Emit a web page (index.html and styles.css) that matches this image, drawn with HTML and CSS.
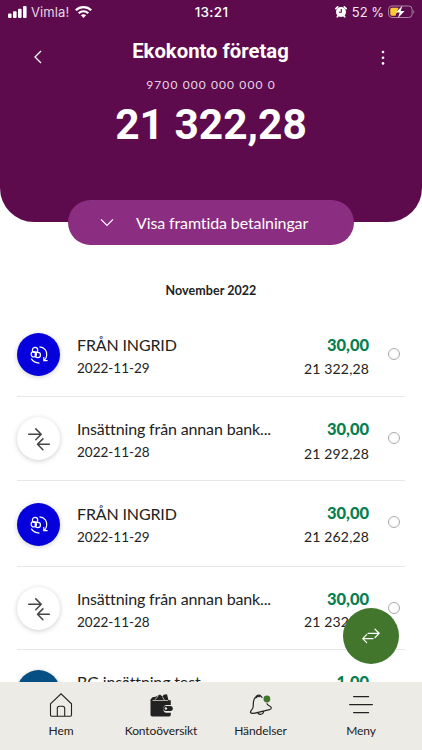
FILE: index.html
```html
<!DOCTYPE html>
<html lang="sv">
<head>
<meta charset="utf-8">
<meta name="viewport" content="width=device-width, initial-scale=1">
<title>Ekokonto företag</title>
<link rel="stylesheet" href="styles.css">
</head>
<body>
<svg width="0" height="0" class="defs">
  <symbol id="recurring" viewBox="0 0 24 24">
    <g fill="none" stroke="currentColor" stroke-width="1.3">
      <circle cx="7.700" cy="6.500" r="2.900"/><circle cx="6.300" cy="11.300" r="2.900"/><circle cx="10.700" cy="12" r="2.900"/>
      <path d="M12.500 3.200c5.500.4 8.500 4.300 7.900 9-.2 2.200-1 4-2.400 5.500M17.200 14.200v4h4.200M3.500 16c1.800 3 5 4.700 9 4.800"/>
    </g>
  </symbol>
  <symbol id="transfer" viewBox="0 0 24 24">
    <g fill="none" stroke="currentColor" stroke-width="1.500" stroke-linecap="round" stroke-linejoin="round">
      <path d="M1.700 7.300h12M8.800 1.900l5.400 5.400-5.400 5.400M22.300 17.300H10.500M15.900 11.900l-5.400 5.400 5.400 5.400"/>
    </g>
  </symbol>
</svg>
<div class="app">
  <header class="header">
    <div class="status">
      <div class="status-left">
        <svg width="19" height="12" viewBox="0 0 19 12" fill="#fff"><rect x="0" y="7.500" width="3.600" height="4.500" rx="1"/><rect x="5" y="5.300" width="3.600" height="6.700" rx="1"/><rect x="10" y="2.700" width="3.600" height="9.300" rx="1"/><rect x="15" y="0" width="3.600" height="12" rx="1"/></svg>
        <span class="carrier">Vimla!</span>
        <svg width="17" height="12" viewBox="0 0 17 12" fill="none" stroke="#fff" stroke-width="2.200"><path d="M.8 4.300c4.300-4.200 11.100-4.200 15.400 0M3.700 7.200c2.700-2.600 6.900-2.600 9.600 0"/><path d="M5.900 9.200c1.500-1.300 3.700-1.300 5.200 0L8.500 12z" fill="#fff" stroke="none"/></svg>
      </div>
      <div class="time">13:21</div>
      <div class="status-right">
        <svg width="12" height="12" viewBox="0 0 12 12"><path d="M.9 2.700 2.700.9M9.300.9l1.800 1.800M2.300 10.800l1-1.200M9.700 10.800l-1-1.200" stroke="#fff" stroke-width="1.700" stroke-linecap="round"/><circle cx="6" cy="6" r="5" fill="#fff"/><path d="M6.300 3v3.300H3.900" fill="none" stroke="#5d0b4d" stroke-width="1.100"/></svg>
        <span class="percent">52 %</span>
        <svg width="27" height="14" viewBox="0 0 27 14"><rect x=".6" y="1" width="23.500" height="11.500" rx="3.300" fill="none" stroke="#a884a0"/><path d="M4 2.700h6.500l-3 8.100H4a1.700 1.700 0 0 1-1.700-1.700V4.400A1.700 1.700 0 0 1 4 2.700z" fill="#fecb2e"/><path d="M25.300 5v3.800c1.300-.7 1.300-3.100 0-3.800z" fill="#a884a0"/><path d="M14.500.6 7.800 7.400h3.900l-1.900 5.800 6.800-7.300h-4z" fill="#fff"/></svg>
      </div>
    </div>
    <div class="title-row">
      <svg class="back" width="10" height="14" viewBox="0 0 10 14" fill="none" stroke="#fff" stroke-width="1.300"><path d="M8 1 2 7l6 6"/></svg>
      <h1>Ekokonto företag</h1>
      <svg class="more" width="4" height="16" viewBox="0 0 4 16" fill="#fff"><circle cx="2" cy="2" r="1.300"/><circle cx="2" cy="7.700" r="1.300"/><circle cx="2" cy="13.400" r="1.300"/></svg>
    </div>
    <div class="account">9700 000 000 000 0</div>
    <div class="balance">21 322,28</div>
  </header>
  <button class="upcoming">
    <svg width="14" height="9" viewBox="0 0 14 9" fill="none" stroke="#fff" stroke-width="1.200"><path d="m1 1.300 6 6 6-6"/></svg>
    <span>Visa framtida betalningar</span>
  </button>
  <h2>November 2022</h2>
  <main class="list">
    <div class="row">
      <div class="avatar blue"><svg width="22" height="22"><use href="#recurring"/></svg></div>
      <div class="info"><div class="name upper">FRÅN INGRID</div><div class="date">2022-11-29</div></div>
      <div class="sums"><div class="amount">30,00</div><div class="after">21 322,28</div></div>
      <i class="radio"></i>
    </div>
    <div class="row second">
      <div class="avatar white"><svg width="24" height="24"><use href="#transfer"/></svg></div>
      <div class="info"><div class="name">Insättning från annan bank...</div><div class="date">2022-11-28</div></div>
      <div class="sums"><div class="amount">30,00</div><div class="after">21 292,28</div></div>
      <i class="radio"></i>
    </div>
    <div class="row third">
      <div class="avatar blue"><svg width="22" height="22"><use href="#recurring"/></svg></div>
      <div class="info"><div class="name upper">FRÅN INGRID</div><div class="date">2022-11-29</div></div>
      <div class="sums"><div class="amount">30,00</div><div class="after">21 262,28</div></div>
      <i class="radio"></i>
    </div>
    <div class="row fourth">
      <div class="avatar white"><svg width="24" height="24"><use href="#transfer"/></svg></div>
      <div class="info"><div class="name">Insättning från annan bank...</div><div class="date">2022-11-28</div></div>
      <div class="sums"><div class="amount">30,00</div><div class="after">21 232,28</div></div>
      <i class="radio"></i>
    </div>
    <div class="row fifth">
      <div class="avatar teal"></div>
      <div class="info"><div class="name">BG insättning test</div></div>
      <div class="sums"><div class="amount">1,00</div></div>
    </div>
  </main>
  <button class="fab" aria-label="Överföring">
    <svg width="20" height="18" viewBox="0 0 20 18" fill="none" stroke="#fff" stroke-width="1.200" stroke-linecap="round" stroke-linejoin="round"><path d="M7 6.300h11.200M14 2.200l4.200 4.100-4.200 4.200M12 11.600H1.800M5.700 7.600l-4 4 4 4.100"/></svg>
  </button>
  <nav class="nav">
    <a class="tab"><svg width="26" height="26" viewBox="0 0 26 26" fill="none" stroke="#222" stroke-width="1.100"><path d="M2.500 11.800 13 1.800l10.500 10V23a1.200 1.200 0 0 1-1.200 1.200H3.700A1.200 1.200 0 0 1 2.500 23zM9.300 24v-7.500a2.200 2.200 0 0 1 2.200-2.200h3a2.200 2.200 0 0 1 2.200 2.200V24"/></svg><span>Hem</span></a>
    <a class="tab"><svg width="26" height="26" viewBox="0 0 26 26"><path d="M2.500 7.500 4.500 5.300l3.200-.5L12 2.500l2.700 2.300.8-2 3.500-.6 1.500 6h2.300v4.800h-4.500a4 4 0 0 0 0 7.800h4.500v2a1.700 1.700 0 0 1-1.700 1.700H4.200a1.700 1.700 0 0 1-1.700-1.700z" fill="#222"/><path d="M4.500 8.500h15.500M7 7.800l3.200-4M14.500 5l2 3.200" fill="none" stroke="#ecebe6" stroke-width=".7"/><rect x="15.200" y="14" width="9.600" height="5" rx="2.500" fill="#222"/><circle cx="17.900" cy="16.500" r="1.200" fill="#ecebe6"/></svg><span>Kontoöversikt</span></a>
    <a class="tab"><svg width="26" height="26" viewBox="0 0 26 26" fill="none" stroke="#222" stroke-width="1.200" stroke-linecap="round" stroke-linejoin="round"><path d="M7.700 5.300C4.500 7.500 5.700 12 5 15.500c-.4 2.200-3 3.600-2.500 5 .4 1.200 2.700.9 4.500.7l14.500-3.600c2.300-.8 2.300-2.500.4-3.400-1.600-.7-2.300-1.300-2.900-2.500M7.700 5.300c.2-2 3.600-3 5-1.300l1.300 1.400M8.500 5.600c.3-1.300 1.700-1.700 3-.9M10.200 21.500c1.500 1.600 5 1 5.400-1.600"/><circle cx="18.900" cy="7" r="3.400" fill="#41762c" stroke="none"/></svg><span>Händelser</span></a>
    <a class="tab"><svg width="26" height="26" viewBox="0 0 26 26" fill="none" stroke="#222" stroke-width="1.200" stroke-linecap="round"><path d="M5.600 4.600h15M1.600 12.600h22.800M5.600 20.600h15"/></svg><span>Meny</span></a>
  </nav>
</div>
</body>
</html>
```
FILE: styles.css
```css
* { box-sizing: border-box; }
body { margin: 0; background: #fff; font-family: Lato, sans-serif; font-variant-ligatures: none; color: #222; }
svg { display: block; flex: none; }
.defs { position: absolute; }
button { border: 0; padding: 0; font: inherit; color: #fff; }
.app { width: 422px; height: 750px; overflow: hidden; position: relative; }
.header { height: 222px; background: #5d0b4d; border-radius: 0 0 34px 34px; color: #fff; }
.status { display: grid; grid-template-columns: 1fr auto 1fr; height: 24px; padding: 0 7px 0 8px; align-items: center; font-family: Inter, sans-serif; font-size: 13px; line-height: 24px; }
.status-left, .status-right { display: flex; align-items: center; }
.status-left { gap: 4px; }
.carrier { width: 39px; margin-right: 1px; letter-spacing: .1px; color: #e5d6e1; }
.time { font-weight: 500; font-size: 13.5px; letter-spacing: .3px; }
.status-right { justify-content: flex-end; }
.percent { margin: 0 4px 0 5px; letter-spacing: 0; color: #f1e7ef; }
.title-row { display: flex; align-items: center; justify-content: space-between; height: 30px; margin-top: 12px; padding: 0 37px 0 33px; }
.back { margin-top: 11px; }
.more { margin-top: 13px; }
h1 { margin: 0 0 0 -3px; font: 700 20.300px/30px Roboto, sans-serif; }
.account { margin-top: 9px; text-align: center; font-size: 12px; line-height: 20px; letter-spacing: 1.100px; color: #e8d5e4; }
.balance { margin-top: 5px; text-align: center; font: 700 42.500px/50px Roboto, sans-serif; }
.upcoming { display: flex; align-items: center; position: relative; width: 286px; height: 45px; margin: -22px 0 0 68px; padding-left: 32px; gap: 22px; border-radius: 23px; background: #8b2d80; font-size: 16px; letter-spacing: -.12px; }
h2 { margin: 36px 0 0; text-align: center; font-size: 12.500px; line-height: 20px; font-weight: 700; letter-spacing: .05px; }
.list { margin: 11px 17px 0; }
.row { display: flex; height: 85px; padding-top: 21px; border-bottom: 1px solid #e7e7e7; }
.second { height: 84px; padding-top: 20px; }
.third { height: 86px; padding-top: 22px; }
.fourth { height: 83px; padding-top: 20px; }
.fifth { padding-top: 20px; }
.avatar { width: 43px; height: 43px; border-radius: 50%; display: flex; align-items: center; justify-content: center; flex: none; box-shadow: 0 1px 5px rgba(0,0,0,.2); }
.blue { background: #0500dc; color: #fff; }
.white { background: #fff; color: #444; }
.teal { background: #064f85; }
.info { margin-left: 17px; width: 200px; white-space: nowrap; }
.name { font-size: 16px; line-height: 23px; letter-spacing: -.14px; }
.date { font-size: 13.500px; line-height: 24px; }
.third .info { margin-top: -1px; }
.sums { width: 92px; padding-top: 1px; text-align: right; }
.amount { font-size: 16.500px; line-height: 23px; font-weight: 900; letter-spacing: -.05px; color: #087f50; }
.after { font-size: 14px; line-height: 24px; letter-spacing: .15px; }
.second .after { line-height: 26px; }
.radio { width: 12px; height: 12px; margin: 15px 0 0 19px; border: 1px solid #aaa; border-radius: 50%; }
.third .sums, .third .radio { position: relative; top: -2px; }
.fourth .after { line-height: 22px; }
.fab { position: absolute; left: 343px; top: 608px; width: 56px; height: 56px; border-radius: 50%; background: #41762c; display: flex; align-items: center; justify-content: center; }
.nav { position: absolute; left: 0; right: 0; bottom: 0; height: 68px; background: #ecebe6; display: grid; grid-template-columns: 101px 99px 100px 101px; padding: 10px 11px 0 10.500px; }
.tab { display: flex; flex-direction: column; align-items: center; font-size: 12px; line-height: 20px; gap: 3px; letter-spacing: -.1px; }
```
